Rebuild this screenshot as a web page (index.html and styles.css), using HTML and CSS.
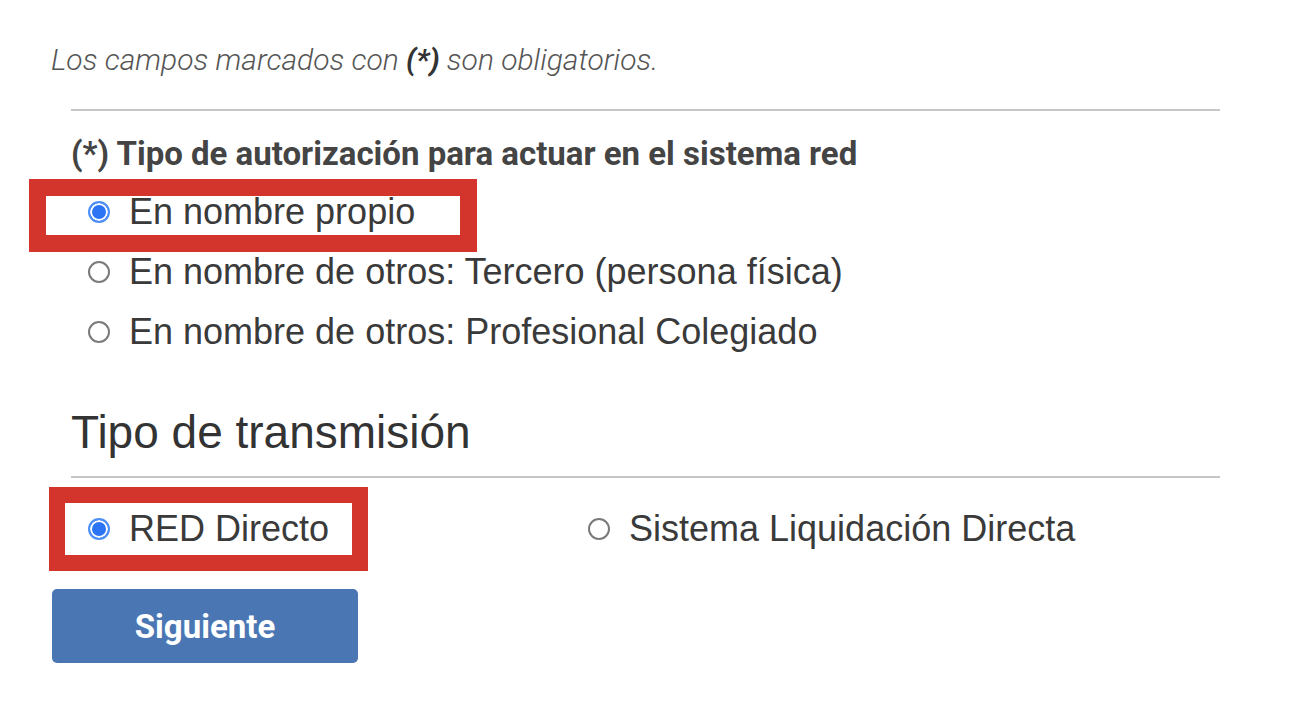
FILE: index.html
```html
<!DOCTYPE html>
<html lang="es">
<head>
<meta charset="utf-8">
<title>Tipo de autorización</title>
<link rel="stylesheet" href="styles.css">
</head>
<body>
<main class="page">
  <p class="note">Los campos marcados con <b>(*)</b> son obligatorios.</p>
  <section class="block">
    <hr class="rule rule-top">
    <h3 class="label">(*) Tipo de autorización para actuar en el sistema red</h3>
    <div class="options">
      <label class="option">
        <span class="radio checked"></span><span class="text">En nombre propio</span>
        <span class="mark mark-one"></span>
      </label>
      <label class="option">
        <span class="radio"></span><span class="text">En nombre de otros: Tercero (persona física)</span>
      </label>
      <label class="option">
        <span class="radio"></span><span class="text">En nombre de otros: Profesional Colegiado</span>
      </label>
    </div>
    <h2 class="title">Tipo de transmisión</h2>
    <hr class="rule rule-title">
    <div class="options-row">
      <label class="option">
        <span class="radio checked"></span><span class="text">RED Directo</span>
        <span class="mark mark-two"></span>
      </label>
      <label class="option">
        <span class="radio"></span><span class="text">Sistema Liquidación Directa</span>
      </label>
    </div>
  </section>
  <button class="btn" type="button">Siguiente</button>
</main>
</body>
</html>
```

FILE: styles.css
```css
html, body {
  margin: 0;
  padding: 0;
  background: #ffffff;
}

.page {
  padding: 44px 0 0 51px;
  font-family: "Liberation Sans", Arial, sans-serif;
  color: #3c3c3c;
}

.note {
  margin: 0;
  font-family: Roboto, "Liberation Sans", sans-serif;
  font-style: italic;
  font-weight: 300;
  font-size: 30px;
  line-height: 32px;
  height: 32px;
  color: #555555;
}

.note b {
  font-weight: 700;
  color: #333333;
}

.block {
  margin-left: 20px;
  width: 1149px;
}

.rule {
  border: 0;
  height: 2px;
  background: #c6c6c6;
  margin: 0;
}

.rule-top {
  margin-top: 33px;
}

.label {
  margin: 25px 0 0 0;
  font-family: Roboto, "Liberation Sans", sans-serif;
  font-weight: 700;
  font-size: 33px;
  line-height: 36px;
  color: #444444;
}

.options {
  margin-top: 10px;
  display: flex;
  flex-direction: column;
}

.option {
  position: relative;
  display: flex;
  align-items: center;
  height: 60px;
  padding-left: 17px;
  font-size: 36px;
  color: #3a3a3a;
}

.radio {
  flex: none;
  box-sizing: border-box;
  width: 22px;
  height: 22px;
  border-radius: 50%;
  border: 2px solid #7a7a7a;
  background: #ffffff;
  margin-right: 19px;
}

.radio.checked {
  border: 2px solid #4e8ff7;
  background: #2c74f4;
  box-shadow: inset 0 0 0 2px #ffffff;
}

.text {
  white-space: nowrap;
}

.mark {
  position: absolute;
  border: 17px solid #d3352d;
  box-sizing: border-box;
  pointer-events: none;
}

.mark-one {
  left: -42px;
  top: -3px;
  width: 448px;
  height: 73px;
}

.mark-two {
  left: -22px;
  top: -12px;
  width: 319px;
  height: 84px;
  border-width: 16px;
}

.title {
  margin: 42px 0 0 0;
  font-weight: 400;
  font-size: 46px;
  line-height: 56px;
  color: #333333;
}

.rule-title {
  margin-top: 16px;
}

.options-row {
  margin-top: 21px;
  display: grid;
  grid-template-columns: 500px 1fr;
}

.btn {
  margin-top: 30px;
  margin-left: 1px;
  width: 306px;
  height: 74px;
  border: 0;
  border-radius: 5px;
  background: #4a77b4;
  color: #ffffff;
  font-family: Roboto, "Liberation Sans", sans-serif;
  font-weight: 700;
  font-size: 33px;
  cursor: pointer;
}
```
